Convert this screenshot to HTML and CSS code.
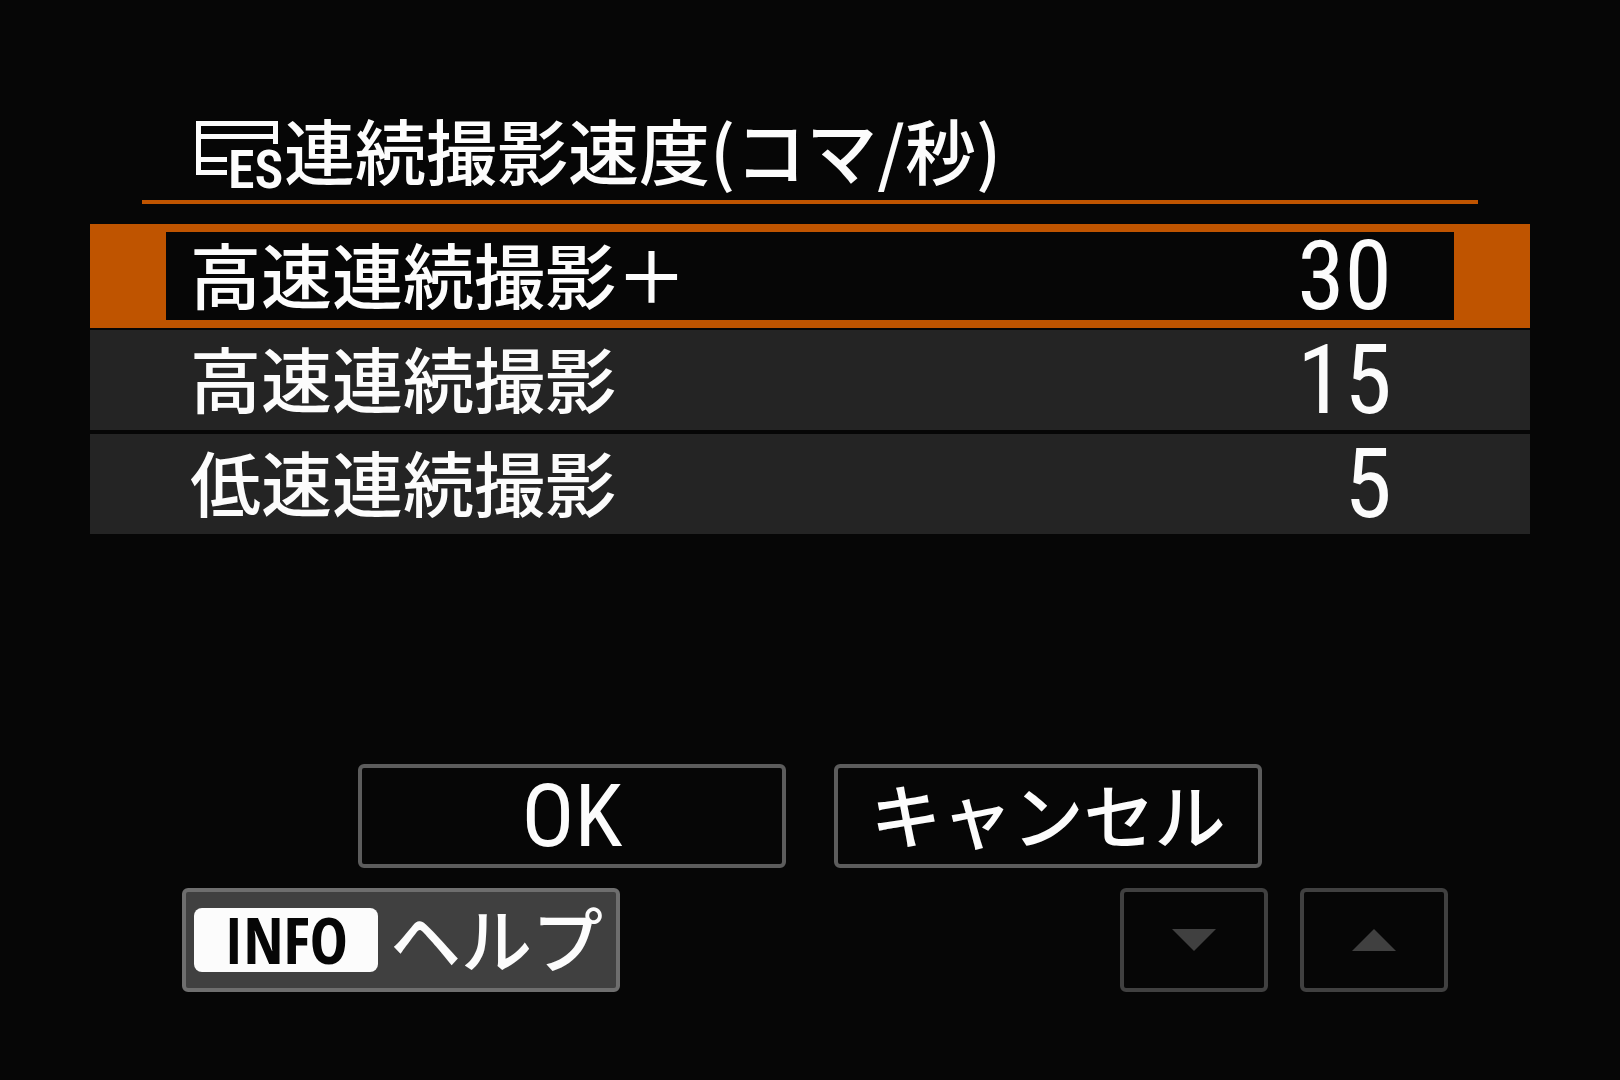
FILE: index.html
```html
<!DOCTYPE html>
<html lang="ja">
<head>
  <meta charset="UTF-8" />
  <meta name="viewport" content="width=device-width, initial-scale=1.0" />
  <title>連続撮影速度</title>
  <link rel="stylesheet" href="styles.css">
</head>
<body>
  <main class="screen">
    <header class="title-bar">
      <svg class="shutter-icon" viewBox="0 -16 84 96" width="84" height="96" role="img" aria-label="電子シャッター">
        <path d="M31 52.5H2.5V3.5H79.5V24M5 16.5H77M5 39.5H31" fill="none" stroke="#fcfcfc" stroke-width="5" />
        <text class="shutter-text" x="32" y="68">ES</text>
      </svg>
      <h1 class="title">連続撮影速度(コマ/秒)</h1>
    </header>

    <ul class="speed-list">
      <li>
        <button class="speed-row selected" type="button">
          <span class="label">高速連続撮影＋</span>
          <span class="speed-value">30</span>
        </button>
      </li>
      <li>
        <button class="speed-row" type="button">
          <span class="label">高速連続撮影</span>
          <span class="speed-value">15</span>
        </button>
      </li>
      <li>
        <button class="speed-row" type="button">
          <span class="label">低速連続撮影</span>
          <span class="speed-value">5</span>
        </button>
      </li>
    </ul>

    <div class="actions">
      <button class="btn btn-action btn-ok" type="button">OK</button>
      <button class="btn btn-action" type="button"><span class="label">キャンセル</span></button>
    </div>

    <footer class="bottom-bar">
      <button class="btn btn-help" type="button">
        <span class="info-badge">INFO</span>
        <span class="label">ヘルプ</span>
      </button>
      <div class="arrows">
        <button class="btn btn-arrow" type="button" aria-label="下へ" disabled>
          <svg viewBox="0 0 44 22" width="44" height="22"><path d="M0 0H44L22 22Z" fill="currentColor" /></svg>
        </button>
        <button class="btn btn-arrow" type="button" aria-label="上へ" disabled>
          <svg viewBox="0 0 44 22" width="44" height="22"><path d="M22 0L44 22H0Z" fill="currentColor" /></svg>
        </button>
      </div>
    </footer>
  </main>
</body>
</html>
```
FILE: styles.css
```css
* {
  margin: 0;
  padding: 0;
  box-sizing: border-box;
}

body {
  background-color: #060606;
  color: #fcfcfc;
  font-family: "Noto Sans CJK JP", sans-serif;
  font-size: 71px;
  font-weight: 500;
}

button {
  font: inherit;
  color: inherit;
  cursor: pointer;
}

.screen {
  display: flex;
  flex-direction: column;
  min-height: 100vh;
  padding: 104px 90px 88px;
}

.title-bar {
  display: flex;
  align-items: center;
  gap: 4px;
  margin: 0 52px 20px;
  padding-left: 54px;
  border-bottom: 4px solid #bf5400;
}

.shutter-icon {
  flex: none;
  overflow: visible;
}

.shutter-text {
  fill: #fcfcfc;
  font-family: "Roboto Condensed", Roboto, sans-serif;
  font-size: 54px;
  font-weight: 600;
}

/* kanji and kana sit low in their line box, the padding lifts them */
.title,
.label {
  padding-bottom: 8px;
  font-size: 71px;
  font-weight: 500;
  line-height: 88px;
  white-space: nowrap;
}

.speed-list {
  list-style: none;
}

.speed-row {
  display: flex;
  justify-content: space-between;
  align-items: center;
  width: 100%;
  height: 104px;
  padding: 0 138px 0 100px;
  border: solid #060606;
  border-width: 2px 0;
  background-color: #242424;
}

.speed-row.selected {
  padding: 0 62px 0 24px;
  border: solid #bf5400;
  border-width: 8px 76px;
  background-color: #060606;
}

.speed-value {
  font-family: "Roboto Condensed", Roboto, sans-serif;
  font-size: 96px;
  font-weight: 400;
  line-height: 88px;
}

.actions {
  display: flex;
  justify-content: center;
  gap: 48px;
  margin-top: auto;
}

.btn {
  display: flex;
  justify-content: center;
  align-items: center;
  height: 104px;
  border: 4px solid #5c5c5c;
  border-radius: 6px;
  background-color: #060606;
}

.btn-action {
  width: 428px;
}

.btn-ok {
  font-family: "Roboto Condensed", Roboto, sans-serif;
  font-size: 88px;
  font-weight: 400;
  line-height: 88px;
}

.bottom-bar {
  display: flex;
  justify-content: space-between;
  margin-top: 20px;
  padding: 0 82px 0 92px;
}

.btn-help {
  justify-content: flex-start;
  gap: 12px;
  width: 438px;
  padding-left: 8px;
  border-color: #6e6e6e;
  background-color: #404040;
}

.info-badge {
  width: 184px;
  height: 64px;
  border-radius: 8px;
  background-color: #fcfcfc;
  color: #060606;
  font-family: "Open Sans Condensed", "Open Sans", sans-serif;
  font-size: 64px;
  font-weight: 700;
  line-height: 64px;
  text-align: center;
}

.arrows {
  display: flex;
  gap: 32px;
}

.btn-arrow {
  width: 148px;
  border-color: #404040;
  color: #404040;
  cursor: default;
}
```
